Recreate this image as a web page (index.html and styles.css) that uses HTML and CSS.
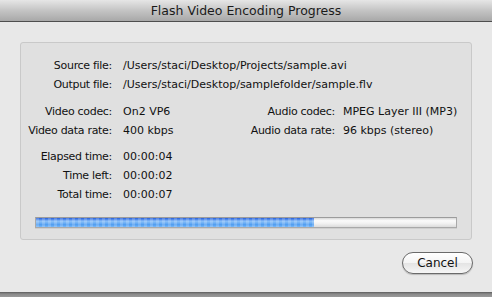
FILE: index.html
```html
<!DOCTYPE html>
<html>
<head>
<meta charset="utf-8">
<link rel="stylesheet" href="styles.css">
</head>
<body>
<div class="window">
  <div class="titlebar">Flash Video Encoding Progress</div>
  <div class="content">
    <div class="panel">
      <div class="grid files">
        <div class="label">Source file:</div><div class="value wide">/Users/staci/Desktop/Projects/sample.avi</div>
        <div class="label">Output file:</div><div class="value wide">/Users/staci/Desktop/samplefolder/sample.flv</div>
      </div>
      <div class="grid codecs">
        <div class="label">Video codec:</div><div class="value">On2 VP6</div>
        <div class="label">Audio codec:</div><div class="value v2">MPEG Layer III (MP3)</div>
        <div class="label">Video data rate:</div><div class="value">400 kbps</div>
        <div class="label">Audio data rate:</div><div class="value v2">96 kbps (stereo)</div>
      </div>
      <div class="grid times">
        <div class="label">Elapsed time:</div><div class="value wide">00:00:04</div>
        <div class="label">Time left:</div><div class="value wide">00:00:02</div>
        <div class="label">Total time:</div><div class="value wide">00:00:07</div>
      </div>
      <div class="progress"><div class="fill" style="width: 66.2%"></div></div>
    </div>
    <div class="buttons">
      <button class="btn">Cancel</button>
    </div>
  </div>
  <div class="bottombar"></div>
</div>
</body>
</html>
```
FILE: styles.css
```css
html, body {
  margin: 0;
  padding: 0;
}
body {
  width: 492px;
  height: 297px;
  overflow: hidden;
  font-family: "DejaVu Sans", sans-serif;
  font-size: 11px;
  color: #111;
  background: #e8e8e8;
}
.window {
  display: flex;
  flex-direction: column;
  height: 297px;
}
.titlebar {
  height: 21px;
  line-height: 22px;
  text-align: center;
  font-size: 12.5px;
  color: #1a1a1a;
  background: linear-gradient(#e6e6e6, #c4c4c4 50%, #a8a8a8);
  border-bottom: 1px solid #4e4e4e;
  flex: none;
}
.content {
  flex: 1;
  display: flex;
  flex-direction: column;
  padding: 20px 20px 0 20px;
}
.panel {
  width: 450px;
  height: 183px;
  box-sizing: content-box;
  background: #e0e0e0;
  border: 1px solid #c9c9c9;
  border-radius: 3px;
  padding-top: 13px;
  display: flex;
  flex-direction: column;
}
.grid {
  display: grid;
  grid-template-columns: 91px 133px 90px 1fr;
  line-height: 19px;
}
.label {
  text-align: right;
  white-space: nowrap;
  letter-spacing: -0.3px;
}
.value {
  padding-left: 11px;
  white-space: nowrap;
}
.value.wide {
  grid-column: 2 / 5;
}
.value.v2 {
  padding-left: 8px;
}
.codecs {
  margin-top: 8px;
}
.times {
  margin-top: 7px;
}
.progress {
  margin: 13px 0 0 14px;
  width: 420px;
  height: 9px;
  border: 1px solid #a9a9a9;
  border-top-color: #9c9c9c;
  background: linear-gradient(#d8d8d8, #fbfbfb 30%, #f2f2f2 60%, #dcdcdc);
  box-shadow: 0 1px 0 #cfcfcf;
}
.fill {
  height: 100%;
  background:
    repeating-linear-gradient(90deg, rgba(255,255,255,0.18) 0 3px, rgba(0,0,0,0) 3px 6px),
    linear-gradient(#2e5fd6 0, #3f7be6 12%, #8cc0f7 35%, #6fb0f5 55%, #4e9cf0 75%, #7ab9f8 100%);
}
.buttons {
  display: flex;
  justify-content: flex-end;
  padding-top: 12px;
}
.btn {
  width: 71px;
  height: 22px;
  margin-right: -1px;
  font-family: "DejaVu Sans", sans-serif;
  font-size: 12px;
  color: #111;
  border: 1px solid #6a6a6a;
  border-radius: 11px;
  background: linear-gradient(#ffffff, #f4f4f4 50%, #e4e4e4 51%, #f6f6f6);
  box-shadow: 0 1px 1px rgba(0,0,0,0.2);
  padding: 0;
}
.bottombar {
  flex: none;
  height: 5px;
  margin-top: auto;
  background: linear-gradient(#5c5c5c, #8a8a8a 40%, #9a9a9a);
}
```
